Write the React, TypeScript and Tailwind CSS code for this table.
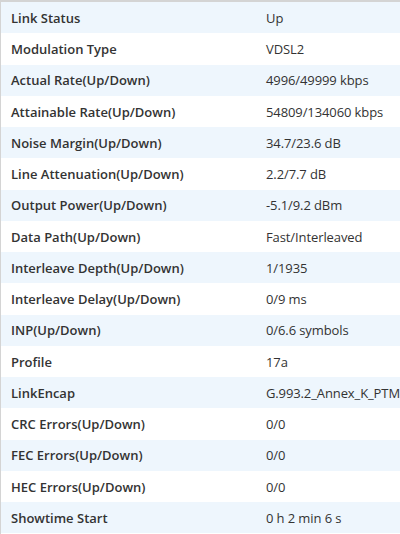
import React from "react";

const rows: [string, string][] = [
  ["Link Status", "Up"],
  ["Modulation Type", "VDSL2"],
  ["Actual Rate(Up/Down)", "4996/49999 kbps"],
  ["Attainable Rate(Up/Down)", "54809/134060 kbps"],
  ["Noise Margin(Up/Down)", "34.7/23.6 dB"],
  ["Line Attenuation(Up/Down)", "2.2/7.7 dB"],
  ["Output Power(Up/Down)", "-5.1/9.2 dBm"],
  ["Data Path(Up/Down)", "Fast/Interleaved"],
  ["Interleave Depth(Up/Down)", "1/1935"],
  ["Interleave Delay(Up/Down)", "0/9 ms"],
  ["INP(Up/Down)", "0/6.6 symbols"],
  ["Profile", "17a"],
  ["LinkEncap", "G.993.2_Annex_K_PTM"],
  ["CRC Errors(Up/Down)", "0/0"],
  ["FEC Errors(Up/Down)", "0/0"],
  ["HEC Errors(Up/Down)", "0/0"],
  ["Showtime Start", "0 h 2 min 6 s"],
];

export default function App() {
  return (
    <div
      className="w-[400px] h-[534px] overflow-hidden bg-white border-t-2 border-l border-[#d4d4d4] text-[13px] text-[#333]"
      style={{ fontFamily: '"Open Sans", "Noto Sans", sans-serif' }}
    >
      {rows.map(([k, v], i) => (
        <div
          key={k}
          className={`flex items-center pt-[2px] h-[31.25px] ${i % 2 === 0 ? "bg-[#eef6fd]" : "bg-white"}`}
        >
          <div className="w-[255px] pl-[10px] font-semibold whitespace-nowrap">{k}</div>
          <div className="flex-1 pl-[10px] whitespace-nowrap tracking-[-0.1px]">{v}</div>
        </div>
      ))}
    </div>
  );
}
